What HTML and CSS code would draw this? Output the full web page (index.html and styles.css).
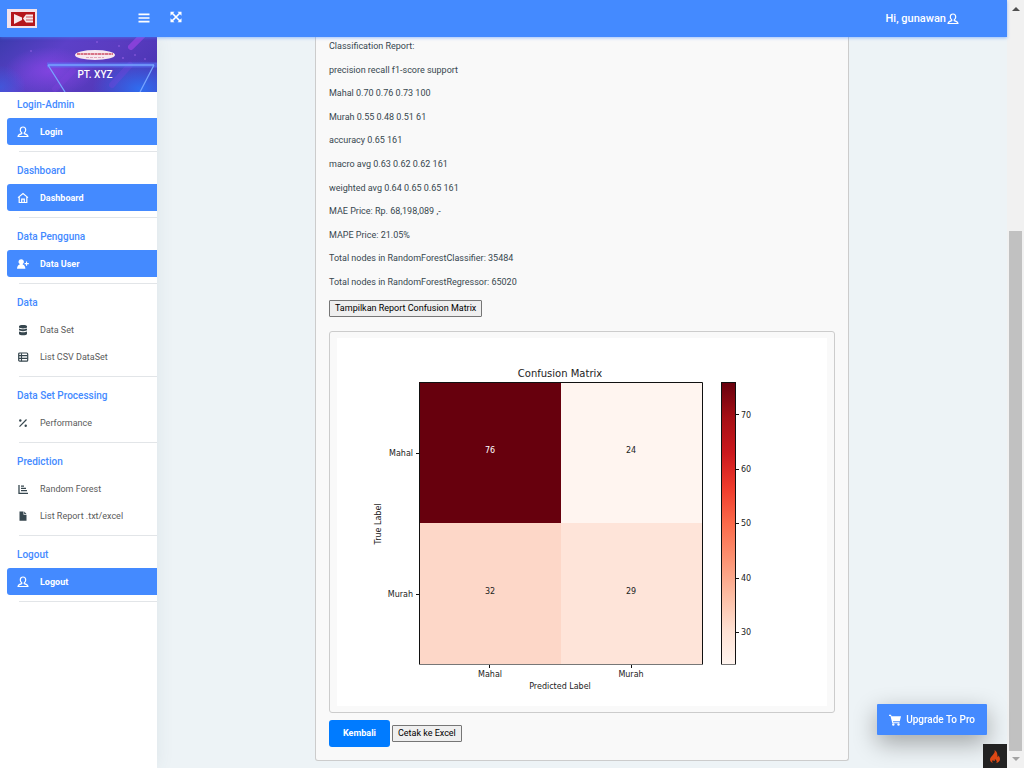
FILE: index.html
```html
<!DOCTYPE html>
<html lang="id">
<head>
<meta charset="utf-8">
<title>PT. XYZ - Random Forest</title>
<link rel="stylesheet" href="styles.css">
</head>
<body>
<svg class="defs" aria-hidden="true">
  <symbol id="user" viewBox="0 0 12 12"><path d="M4.700 6.700C3.800 6 3.300 5.100 3.300 3.900C3.300 2.100 4.400 1 6 1s2.700 1.100 2.700 2.900c0 1.200-.5 2.100-1.400 2.800M4.800 6.500v1.100C2.800 8 1.300 8.900 1 10.500h10C10.700 8.900 9.200 8 7.200 7.600V6.500" fill="none" stroke="currentColor" stroke-width="1.200" stroke-linejoin="round"/></symbol>
  <symbol id="home" viewBox="0 0 12 12"><path d="M1 5.600L6 1.600l5 4M2.200 4.800v5.700h7.600V4.800M4.700 10.500V7.200h2.600v3.300" fill="none" stroke="currentColor" stroke-width="1.200"/></symbol>
  <symbol id="adduser" viewBox="0 0 12 12"><path d="M4.200 1.200a2.600 2.600 0 0 1 1.500 4.800v.5c1.700.5 2.600 1.800 2.700 4.300H0c.1-2.500 1-3.800 2.700-4.300V6a2.600 2.600 0 0 1 1.500-4.800zM9 3.500h1.100V5h1.700v1.200h-1.700v1.600H9V6.200H7.600V5H9z" fill="currentColor"/></symbol>
  <symbol id="database" viewBox="0 0 12 12"><path d="M2 2.200C2 .6 10 .6 10 2.200v1C10 4.800 2 4.800 2 3.200zM2 4.600c1.500.9 6.500.9 8 0v1.500c0 1.500-8 1.500-8 0zM2 7.500c1.500.9 6.500.9 8 0v2.400c0 1.700-8 1.700-8 0z" fill="currentColor"/></symbol>
  <symbol id="table" viewBox="0 0 12 12"><rect x="1.700" y="2" width="9" height="8.200" rx="1" fill="none" stroke="currentColor" stroke-width="1.200"/><path d="M2 4.600h8.500M2 7.400h8.500M4.500 2.200v8" stroke="currentColor" stroke-width="1.100"/></symbol>
  <symbol id="percent" viewBox="0 0 12 12"><path d="M2.500 9.700L9.500 2.500" stroke="currentColor" stroke-width="1.200"/><circle cx="3.300" cy="3.500" r="1.200" fill="currentColor"/><circle cx="8.700" cy="8.700" r="1.200" fill="currentColor"/></symbol>
  <symbol id="bars" viewBox="0 0 12 12"><path d="M2 2v8.300h9M4 3.200h3M4 5.400h5M4 7.700h6" fill="none" stroke="currentColor" stroke-width="1.300"/></symbol>
  <symbol id="file" viewBox="0 0 12 12"><path d="M2.500 1.500h4v3.200h3v6h-7zM7.200 1.500l2.300 2.500H7.200z" fill="currentColor"/></symbol>
</svg>

<div class="shell">
  <div class="app">
    <header class="topbar">
      <div class="brand">
        <svg class="logo" viewBox="0 0 30 19" role="img" aria-label="Logo"><path d="M0 0h30v19H0z" fill="#f3e3ec"/><path d="M4 3h24v14H4z" fill="#b5161c"/><path d="M7 5l8 3.500V11l-8 4z" fill="#f8e9ec"/><path d="M16 9.500l3-4h7v8h-7z" fill="#f8e9ec"/><path d="M19 8h7M19 11h7" stroke="#c9565c"/></svg>
        <button class="icon-btn" type="button" aria-label="Menu"><svg viewBox="0 0 12 12"><path d="M.5 2.300h11M.5 6h11M.5 9.700h11" stroke="#fff" stroke-width="1.700"/></svg></button>
      </div>
      <button class="icon-btn expand" type="button" aria-label="Layar penuh"><svg viewBox="0 0 12 12"><path d="M2 2l8 8M10 2l-8 8" stroke="#fff" stroke-width="1.700"/><path d="M.5.8h4L.5 4.800zM11.500.8v4l-4-4zM.5 11.200v-4l4 4zM11.500 11.200h-4l4-4z" fill="#fff"/></svg></button>
      <a class="account" href="#">Hi, gunawan <svg><use href="#user"/></svg></a>
    </header>

    <div class="body">
      <aside class="sidebar">
        <div class="banner">
          <svg class="banner-art" viewBox="0 0 157 55" preserveAspectRatio="none" aria-hidden="true">
            <defs>
              <linearGradient id="sky" x1="0" x2="1" y1="0" y2=".4"><stop offset="0" stop-color="#3c3bad"/><stop offset=".4" stop-color="#5c40c8"/><stop offset=".7" stop-color="#5a3cc0"/><stop offset="1" stop-color="#4d36b6"/></linearGradient>
              <radialGradient id="blue"><stop offset="0" stop-color="#2f6df0"/><stop offset="1" stop-color="#2f6df0" stop-opacity="0"/></radialGradient>
              <radialGradient id="violet"><stop offset="0" stop-color="#8a45e6"/><stop offset="1" stop-color="#8a45e6" stop-opacity="0"/></radialGradient>
            </defs>
            <path d="M0 0h157v55H0z" fill="url(#sky)"/>
            <ellipse cx="50" cy="34" rx="45" ry="24" fill="url(#violet)" opacity=".8"/>
            <ellipse cx="140" cy="52" rx="48" ry="30" fill="url(#blue)"/>
            <ellipse cx="0" cy="50" rx="26" ry="22" fill="url(#blue)" opacity=".5"/>
            <path d="M131 10L144-3" stroke="#9343e0" stroke-width="6" stroke-linecap="round" opacity=".8"/>
            <path d="M112 48l18-20M55 52l18-18" stroke="#8343e0" stroke-width="6" stroke-linecap="round" opacity=".3"/>
            <path d="M47 28h110" stroke="#5a7dff" stroke-width="5" opacity=".5"/>
            <path d="M48 28h106M48 28l17 27M154 28l-14 27" fill="none" stroke="#77a4ff" stroke-width="1.300"/>
            <g fill="#a96cf0"><circle cx="97" cy="5" r=".7"/><circle cx="123" cy="21" r=".8"/><circle cx="135" cy="18" r=".7"/><circle cx="145" cy="22" r=".7"/><circle cx="31" cy="14" r=".7"/><circle cx="119" cy="9" r=".7"/></g>
            <ellipse cx="95" cy="18" rx="20" ry="5" fill="#f7e9ef"/>
            <path d="M77 17h36" stroke="#d77386" stroke-width="2" stroke-dasharray="3 .5"/>
            <path d="M86 20.500h18" stroke="#dfa6bc" stroke-dasharray="3 1"/>
          </svg>
          <span class="company">PT. XYZ</span>
        </div>
        <nav class="menu">
          <section><h2>Login-Admin</h2><a class="item active" href="#"><svg><use href="#user"/></svg>Login</a></section>
          <section><h2>Dashboard</h2><a class="item active" href="#"><svg><use href="#home"/></svg>Dashboard</a></section>
          <section><h2>Data Pengguna</h2><a class="item active" href="#"><svg><use href="#adduser"/></svg>Data User</a></section>
          <section><h2>Data</h2><a class="item" href="#"><svg><use href="#database"/></svg>Data Set</a><a class="item" href="#"><svg><use href="#table"/></svg>List CSV DataSet</a></section>
          <section><h2>Data Set Processing</h2><a class="item" href="#"><svg><use href="#percent"/></svg>Performance</a></section>
          <section><h2>Prediction</h2><a class="item" href="#"><svg><use href="#bars"/></svg>Random Forest</a><a class="item" href="#"><svg><use href="#file"/></svg>List Report .txt/excel</a></section>
          <section><h2>Logout</h2><a class="item active" href="#"><svg><use href="#user"/></svg>Logout</a></section>
        </nav>
      </aside>

      <main class="content">
        <div class="card">
          <div class="report">
            <p>Classification Report:</p>
            <p>precision recall f1-score support</p>
            <p>Mahal 0.70 0.76 0.73 100</p>
            <p>Murah 0.55 0.48 0.51 61</p>
            <p>accuracy 0.65 161</p>
            <p>macro avg 0.63 0.62 0.62 161</p>
            <p>weighted avg 0.64 0.65 0.65 161</p>
            <p>MAE Price: Rp. 68,198,089 ,-</p>
            <p>MAPE Price: 21.05%</p>
            <p>Total nodes in RandomForestClassifier: 35484</p>
            <p>Total nodes in RandomForestRegressor: 65020</p>
          </div>
          <button class="plain" type="button">Tampilkan Report Confusion Matrix</button>
          <div class="figure">
            <svg class="chart" viewBox="0 0 490 368" role="img" aria-label="Confusion Matrix">
              <defs><linearGradient id="reds" x1="0" y1="0" x2="0" y2="1"><stop offset="0" stop-color="#67000d"/><stop offset=".125" stop-color="#a50f15"/><stop offset=".25" stop-color="#cb181d"/><stop offset=".375" stop-color="#ef3b2c"/><stop offset=".5" stop-color="#fb6a4a"/><stop offset=".625" stop-color="#fc9272"/><stop offset=".75" stop-color="#fcbba1"/><stop offset=".875" stop-color="#fee0d2"/><stop offset="1" stop-color="#fff5f0"/></linearGradient></defs>
              <path d="M0 0h490v368H0z" fill="#fff"/>
              <text class="chart-title" x="223" y="39">Confusion Matrix</text>
              <path d="M82 44h142v141H82z" fill="#67000d"/>
              <path d="M224 44h142v141H224z" fill="#fff5f0"/>
              <path d="M82 185h142v142H82z" fill="#fdd7c8"/>
              <path d="M224 185h142v142H224z" fill="#fee4d9"/>
              <path d="M384 44h15v283h-15z" fill="url(#reds)"/>
              <path d="M82.500 327V44.500h283V327M384.500 327V44.500h14V327" fill="none" stroke="#111"/>
              <path d="M82 326.500h284M384 326.500h15" stroke="#777"/>
              <path d="M79 115.500h3M79 256.500h3M152.500 327v3M294.500 327v3M399 76.500h3M399 131.500h3M399 185.500h3M399 240.500h3M399 294.500h3" stroke="#111"/>
              <g text-anchor="middle"><text x="153" y="115" fill="#fff">76</text><text x="294" y="115">24</text><text x="153" y="256">32</text><text x="294" y="256">29</text><text x="153" y="339">Mahal</text><text x="294" y="339">Murah</text><text x="223" y="351">Predicted Label</text><text transform="translate(44 186) rotate(-90)">True Label</text></g>
              <g text-anchor="end"><text x="76" y="118">Mahal</text><text x="76" y="259">Murah</text></g>
              <g><text x="404" y="80">70</text><text x="404" y="134">60</text><text x="404" y="188">50</text><text x="404" y="243">40</text><text x="404" y="297">30</text></g>
            </svg>
          </div>
          <div class="actions">
            <a class="primary" href="#">Kembali</a>
            <button class="plain" type="button">Cetak ke Excel</button>
          </div>
        </div>
      </main>
    </div>
  </div>

  <div class="scrollbar" aria-hidden="true">
    <span class="arrow"><svg viewBox="0 0 17 17"><path d="M5 11h8L9 7z" fill="#505050"/></svg></span>
    <span class="before"></span>
    <span class="thumb"></span>
    <span class="arrow"><svg viewBox="0 0 17 17"><path d="M5 6h8l-4 4z" fill="#a3a3a3"/></svg></span>
  </div>
</div>

<a class="upgrade" href="#"><svg viewBox="0 0 12 12"><path d="M0 .8h2l.5 1.400H12l-1.200 5H4l.2 1h6.300v1.100H3.300L1.500 2H0z" fill="#fff"/><circle cx="4.300" cy="10.500" r="1.200" fill="#fff"/><circle cx="9.500" cy="10.500" r="1.200" fill="#fff"/></svg>Upgrade To Pro</a>
<button class="debug" type="button" aria-label="Debug"><svg viewBox="0 0 12 15"><path d="M5.500 1c.7 2-.2 3.200-1.500 4.700C2.500 7.300.8 8.800 1 10.800c.2 1.700 1.300 2.700 3 3.200-1.200-1-1-2.400.2-3.300 0 1 .5 1.400 1.100 1.400.9-.2.600-1.300.5-2 1.400.8 2.700 2.500 1.500 3.900 2.300-.7 3.700-2 3.700-3.800 0-1.600-.9-2.500-1.500-3.600-.2.800-.3 1.200-.9 1.500C8.400 5.600 8.500 2.500 5.500 1z" fill="#dd4814"/></svg></button>
</body>
</html>
```
FILE: styles.css
```css
* { box-sizing: border-box; }
body { margin: 0; font: 9px/14px Roboto, "Open Sans", sans-serif; color: #37474f; background: #edf3f6; }
a { color: inherit; text-decoration: none; }
button { font: inherit; margin: 0; cursor: pointer; }
svg { display: block; }
h2, p { margin: 0; }
.defs { position: absolute; width: 0; height: 0; }

.shell { display: flex; height: 100vh; }
.app { flex: 1; min-width: 0; display: flex; flex-direction: column; }

.topbar { display: flex; align-items: center; height: 37px; padding-right: 48px; background: #448aff; color: #fff; box-shadow: 0 1px 3px #448aff80; z-index: 1; }
.brand { display: flex; align-items: center; justify-content: space-between; width: 157px; padding: 0 7px; }
.logo { width: 30px; height: 19px; }
.icon-btn { display: flex; padding: 0; border: 0; background: none; }
.icon-btn svg { width: 12px; height: 12px; }
.brand .icon-btn { margin-bottom: 2px; }
.expand { margin: 0 0 3px 13px; }
.account { display: flex; align-items: center; gap: 1px; margin-left: auto; font-size: 11px; font-weight: 500; }
.account svg { width: 12px; height: 12px; }

.body { flex: 1; min-height: 0; display: flex; }
.sidebar { flex: none; width: 157px; background: #fff; box-shadow: 1px 0 16px #455a6414; }
.banner { position: relative; display: flex; align-items: flex-end; justify-content: center; height: 55px; padding: 0 0 10px 33px; }
.banner-art { position: absolute; inset: 0; width: 100%; height: 100%; }
.company { position: relative; color: #fff; font-size: 10px; font-weight: 500; }
.menu { display: flex; flex-direction: column; gap: 12px; padding: 6px 0 0 7px; }
.menu section { display: flex; flex-direction: column; }
.menu section::after { content: ""; height: 1px; margin: 6px 0 0 12px; background: #e2e5e8; }
.menu h2 { margin: 0 0 7px 10px; font-size: 10px; line-height: 13px; font-weight: 500; color: #448aff; }
.item { display: flex; align-items: center; gap: 11px; height: 27px; padding-left: 10px; color: #5b5b5b; }
.item svg { width: 12px; height: 12px; color: #37474f; }
.item.active { border-radius: 3px 0 0 3px; background: #448aff; color: #fff; font-weight: 700; }
.item.active svg { color: #fff; }

.content { flex: 1; min-width: 0; }
.card { max-width: 534px; margin: 0 auto; padding: 2px 13px 13px; background: #f9f9f9; border: 1px solid #ccc; border-top: 0; border-radius: 0 0 3px 3px; }
.report { display: flex; flex-direction: column; justify-content: space-between; min-height: 250px; margin-bottom: 11px; }
.plain { height: 17px; padding: 0 5px; border: 1px solid #767676; border-radius: 1px; background: #efefef; color: #000; line-height: 13px; }
.figure { margin: 14px 0 7px; padding: 6px 7px; border: 1px solid #ccc; border-radius: 3px; }
.chart { width: 100%; height: auto; font: 8px "DejaVu Sans", sans-serif; fill: #222; }
.chart-title { font-size: 10px; text-anchor: middle; }
.actions { display: flex; align-items: center; gap: 2px; }
.primary { padding: 6px 14px 7px; border-radius: 3px; background: #007bff; color: #fff; font-weight: 700; }

.scrollbar { flex: none; display: flex; flex-direction: column; width: 17px; background: #f1f1f1; }
.arrow { height: 17px; }
.before { flex: 214; }
.thumb { flex: 520; margin: 0 2px; background: #c1c1c1; }

.upgrade { position: fixed; right: 37px; bottom: 33px; display: flex; align-items: center; gap: 5px; height: 31px; padding: 0 12px; border-radius: 1px; background: #448aff; color: #fff; font-size: 10px; font-weight: 500; box-shadow: 0 8px 24px #00000055; }
.upgrade svg { width: 12px; height: 12px; }
.debug { position: fixed; right: 17px; bottom: 0; display: flex; align-items: center; justify-content: center; width: 24px; height: 24px; padding: 0; border: 0; background: #222; }
.debug svg { width: 12px; height: 15px; }
```
